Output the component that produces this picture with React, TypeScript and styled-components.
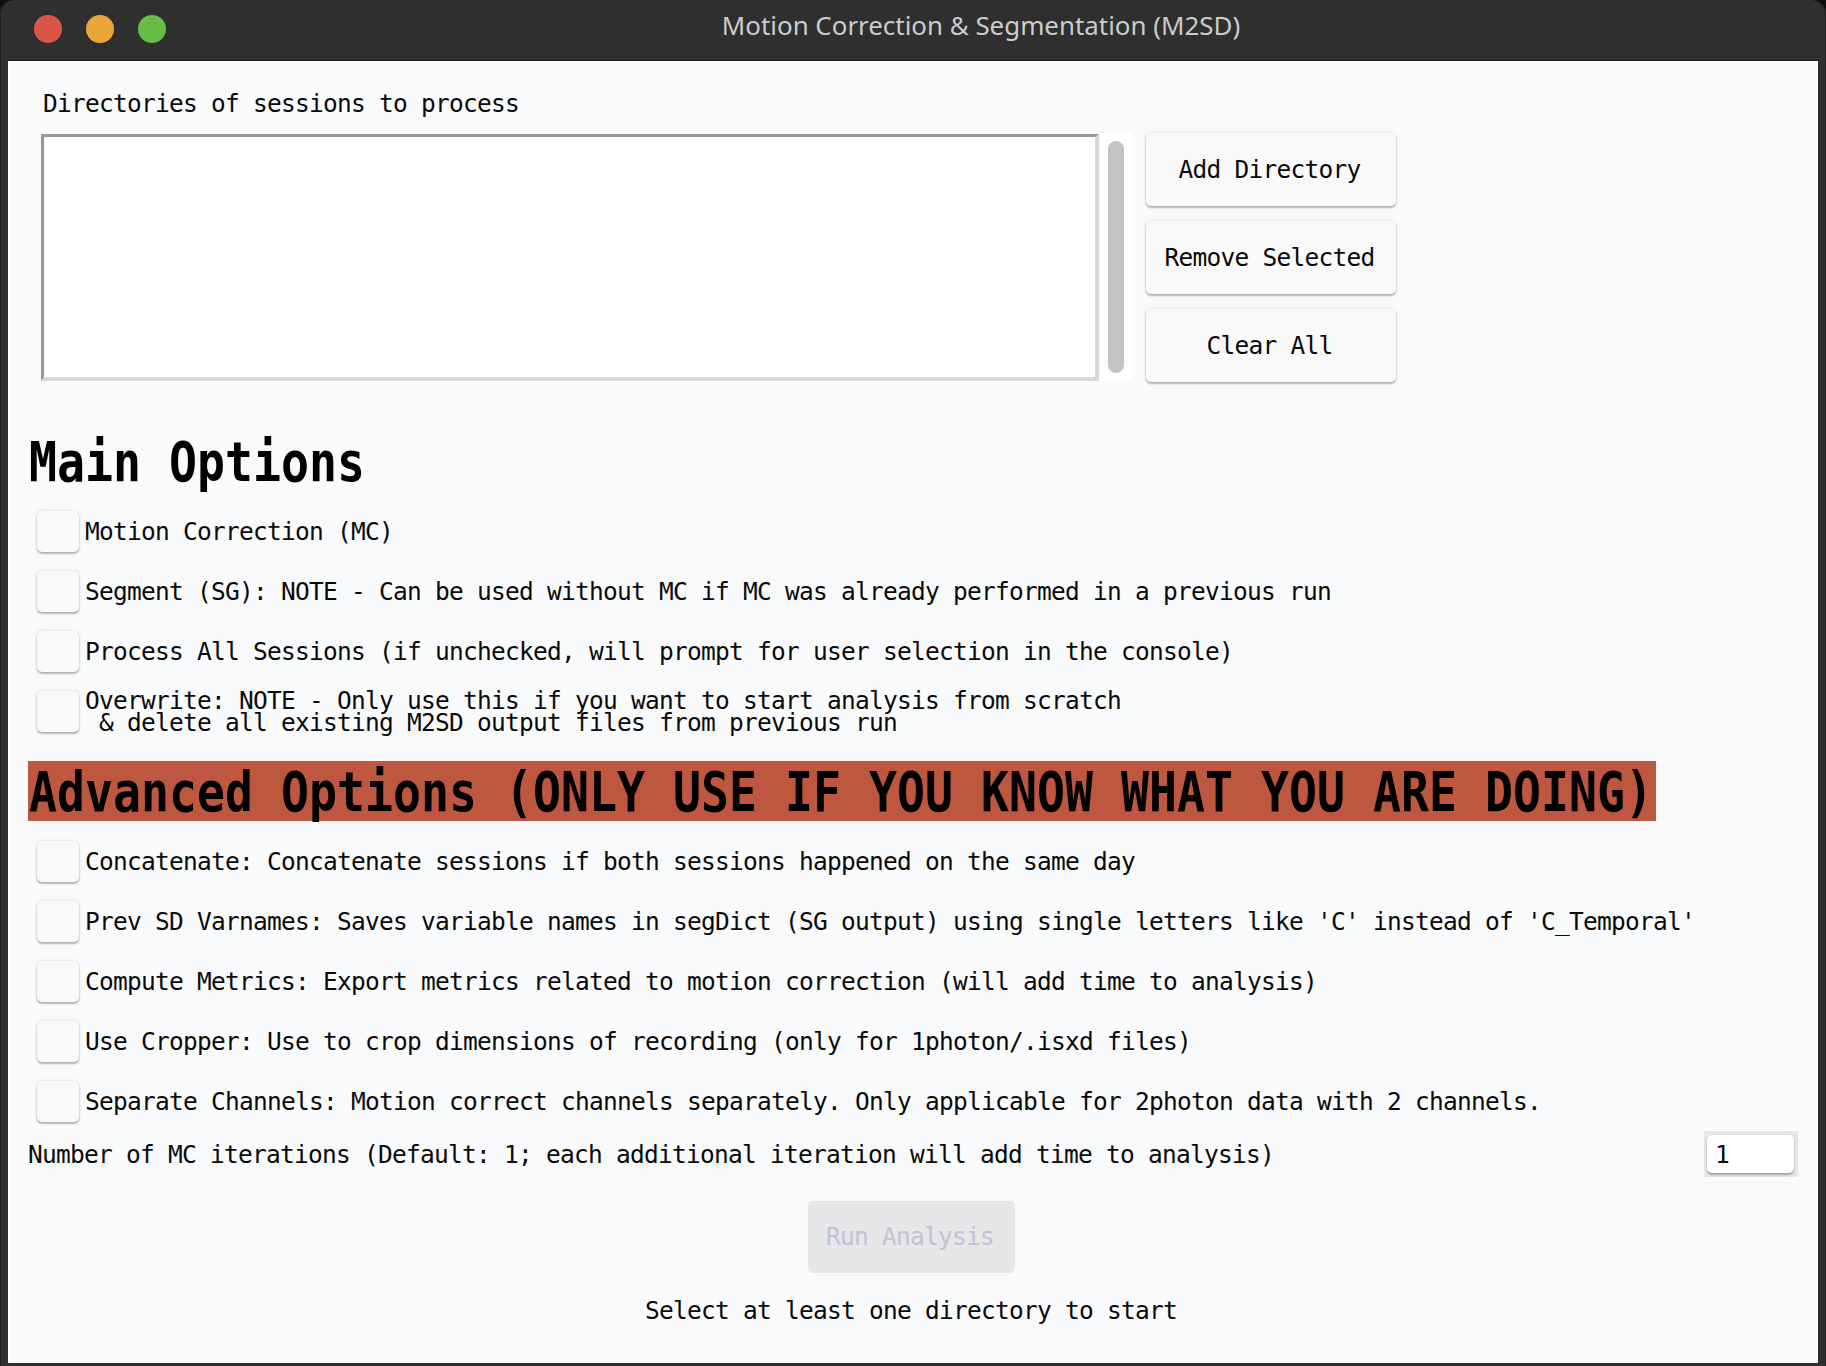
import React, { useState } from 'react';
import styled, { createGlobalStyle } from 'styled-components';

const GlobalStyle = createGlobalStyle`
  * { box-sizing: border-box; }
  body { margin: 0; background: #0c1110; overflow: hidden; }
`;

const mono = `'DejaVu Sans Mono', 'Liberation Mono', monospace`;

const Window = styled.div`
  display: flex;
  flex-direction: column;
  width: 1826px;
  height: 1366px;
  padding: 0 8px 3px;
  background: #2f2f2f;
  border-radius: 14px 14px 0 0;
  box-shadow: inset 1px 0 0 #1f1f1f, inset -1px 0 0 #1f1f1f;
  overflow: hidden;
`;

const TitleBar = styled.header`
  display: grid;
  grid-template-columns: 200px 1fr 64px;
  align-items: center;
  height: 61px;
  flex: none;
  border-bottom: 1px solid #1f1f1f;
`;

const Lights = styled.div`
  display: flex;
  gap: 24px;
  padding: 0 0 2px 26px;
`;

const Light = styled.span<{ $color: string }>`
  width: 28px;
  height: 28px;
  border-radius: 50%;
  background: ${(p) => p.$color};
`;

const Title = styled.h1`
  margin: 0;
  padding-bottom: 10px;
  text-align: center;
  color: #cbcbcb;
  font: 400 25.9px/34px 'Noto Sans', 'Open Sans', sans-serif;
  white-space: nowrap;
`;

const Content = styled.main`
  flex: 1;
  display: flex;
  flex-direction: column;
  border: 2px solid #ffffff;
  border-top-width: 1px;
  background: #f9fafc;
  padding: 28px 18px 0;
  color: #0a0a0a;
  font: 400 24.5px/28px ${mono};
  letter-spacing: -0.75px;
`;

const ListLabel = styled.div`
  padding-left: 15px;
  margin-bottom: 14px;
`;

const DirectoryRow = styled.section`
  display: flex;
  height: 250px;
  padding-left: 13px;
`;

const ListBox = styled.div`
  width: 1058px;
  height: 247px;
  margin-top: 2px;
  background: #fff;
  border-style: solid;
  border-width: 3px 4px 4px 3px;
  border-color: #999 #d8d8d8 #d8d8d8 #999;
`;

const ScrollTrack = styled.div`
  width: 33px;
  height: 248px;
  margin: 1px 14px 0 0;
  padding: 8px 8px 8px 9px;
  background: #fff;
`;

const ScrollThumb = styled.div`
  height: 232px;
  border-radius: 8px;
  background: #c4c4c4;
`;

const ButtonColumn = styled.div`
  display: flex;
  flex-direction: column;
  gap: 15px;
  padding-top: 1px;
`;

const raised = `
  background: #f9f9f9;
  box-shadow: 0 2px 2px rgba(0, 0, 0, 0.26), 0 0 3px rgba(0, 0, 0, 0.15);
`;

const Button = styled.button`
  width: 250px;
  height: 73px;
  padding: 1px 3px 0 0;
  border: 0;
  border-radius: 5px;
  color: #0a0a0a;
  font: inherit;
  letter-spacing: inherit;
  ${raised}

  &:disabled {
    width: 207px;
    height: 72px;
    padding: 0 2px 0 0;
    background: #e6e7e9;
    color: #c3c2d5;
    box-shadow: none;
  }
`;

const Heading = styled.h2<{ $warning?: boolean }>`
  width: 1628px;
  height: 60px;
  margin: 0 0 10px;
  padding: 1px 0 0 1px;
  background: ${(p) => (p.$warning ? '#bd5740' : 'transparent')};
  color: #000;
  font: 700 46.5px/60px ${mono};
  letter-spacing: 0.005px;
  white-space: nowrap;

  span {
    display: block;
    transform: scaleY(1.18);
  }
`;

const OptionGroup = styled.section`
  display: flex;
  flex-direction: column;
`;

const Option = styled.label`
  display: flex;
  align-items: center;
  height: 60px;
  padding-left: 9px;
  gap: 6px;
  line-height: 22px;
  white-space: pre;
`;

const OptionText = styled.span`
  padding-top: 1px;
`;

const Checkbox = styled.input.attrs({ type: 'checkbox' })`
  appearance: none;
  width: 42px;
  height: 41px;
  margin: 0;
  border-radius: 5px;
  ${raised}

  &:checked {
    background: #c4c4c4;
  }
`;

const IterationRow = styled.label`
  display: flex;
  align-items: center;
  justify-content: space-between;
  height: 46px;
`;

const IterationText = styled.span`
  padding-top: 2px;
`;

const InputFrame = styled.span`
  display: flex;
  width: 94px;
  height: 46px;
  padding: 4px 4px 4px 3px;
  background: #e7e7e8;
`;

const NumberInput = styled.input`
  width: 87px;
  height: 38px;
  padding: 0 8px;
  border: 0;
  border-radius: 5px;
  background: #fff;
  color: #0a0a0a;
  font: inherit;
  letter-spacing: inherit;
  box-shadow: 0 2px 2px rgba(0, 0, 0, 0.28), 0 0 2px rgba(0, 0, 0, 0.12);
`;

const Footer = styled.footer`
  display: flex;
  flex-direction: column;
  align-items: center;
  gap: 24px;
  margin-top: 24px;
  padding-right: 4px;
`;

const mainOptions = [
  'Motion Correction (MC)',
  'Segment (SG): NOTE - Can be used without MC if MC was already performed in a previous run',
  'Process All Sessions (if unchecked, will prompt for user selection in the console)',
  'Overwrite: NOTE - Only use this if you want to start analysis from scratch\n & delete all existing M2SD output files from previous run',
];

const advancedOptions = [
  'Concatenate: Concatenate sessions if both sessions happened on the same day',
  "Prev SD Varnames: Saves variable names in segDict (SG output) using single letters like 'C' instead of 'C_Temporal'",
  'Compute Metrics: Export metrics related to motion correction (will add time to analysis)',
  'Use Cropper: Use to crop dimensions of recording (only for 1photon/.isxd files)',
  'Separate Channels: Motion correct channels separately. Only applicable for 2photon data with 2 channels.',
];

function Options({ items }: { items: string[] }) {
  return (
    <OptionGroup>
      {items.map((text) => (
        <Option key={text}>
          <Checkbox />
          <OptionText>{text}</OptionText>
        </Option>
      ))}
    </OptionGroup>
  );
}

const MainSection = styled.div`
  margin: 49px 0 20px;
`;

export default function App() {
  const [iterations, setIterations] = useState('1');

  return (
    <>
      <GlobalStyle />
      <Window>
        <TitleBar>
          <Lights>
            <Light $color="#dc5549" />
            <Light $color="#e9a73a" />
            <Light $color="#66be46" />
          </Lights>
          <Title>Motion Correction &amp; Segmentation (M2SD)</Title>
        </TitleBar>
        <Content>
          <ListLabel>Directories of sessions to process</ListLabel>
          <DirectoryRow>
            <ListBox />
            <ScrollTrack>
              <ScrollThumb />
            </ScrollTrack>
            <ButtonColumn>
              <Button>Add Directory</Button>
              <Button>Remove Selected</Button>
              <Button>Clear All</Button>
            </ButtonColumn>
          </DirectoryRow>
          <MainSection>
            <Heading>
              <span>Main Options</span>
            </Heading>
            <Options items={mainOptions} />
          </MainSection>
          <Heading $warning>
            <span>Advanced Options (ONLY USE IF YOU KNOW WHAT YOU ARE DOING)</span>
          </Heading>
          <Options items={advancedOptions} />
          <IterationRow>
            <IterationText>
              Number of MC iterations (Default: 1; each additional iteration will add time to analysis)
            </IterationText>
            <InputFrame>
              <NumberInput value={iterations} onChange={(e) => setIterations(e.target.value)} />
            </InputFrame>
          </IterationRow>
          <Footer>
            <Button disabled>Run Analysis</Button>
            <div>Select at least one directory to start</div>
          </Footer>
        </Content>
      </Window>
    </>
  );
}
